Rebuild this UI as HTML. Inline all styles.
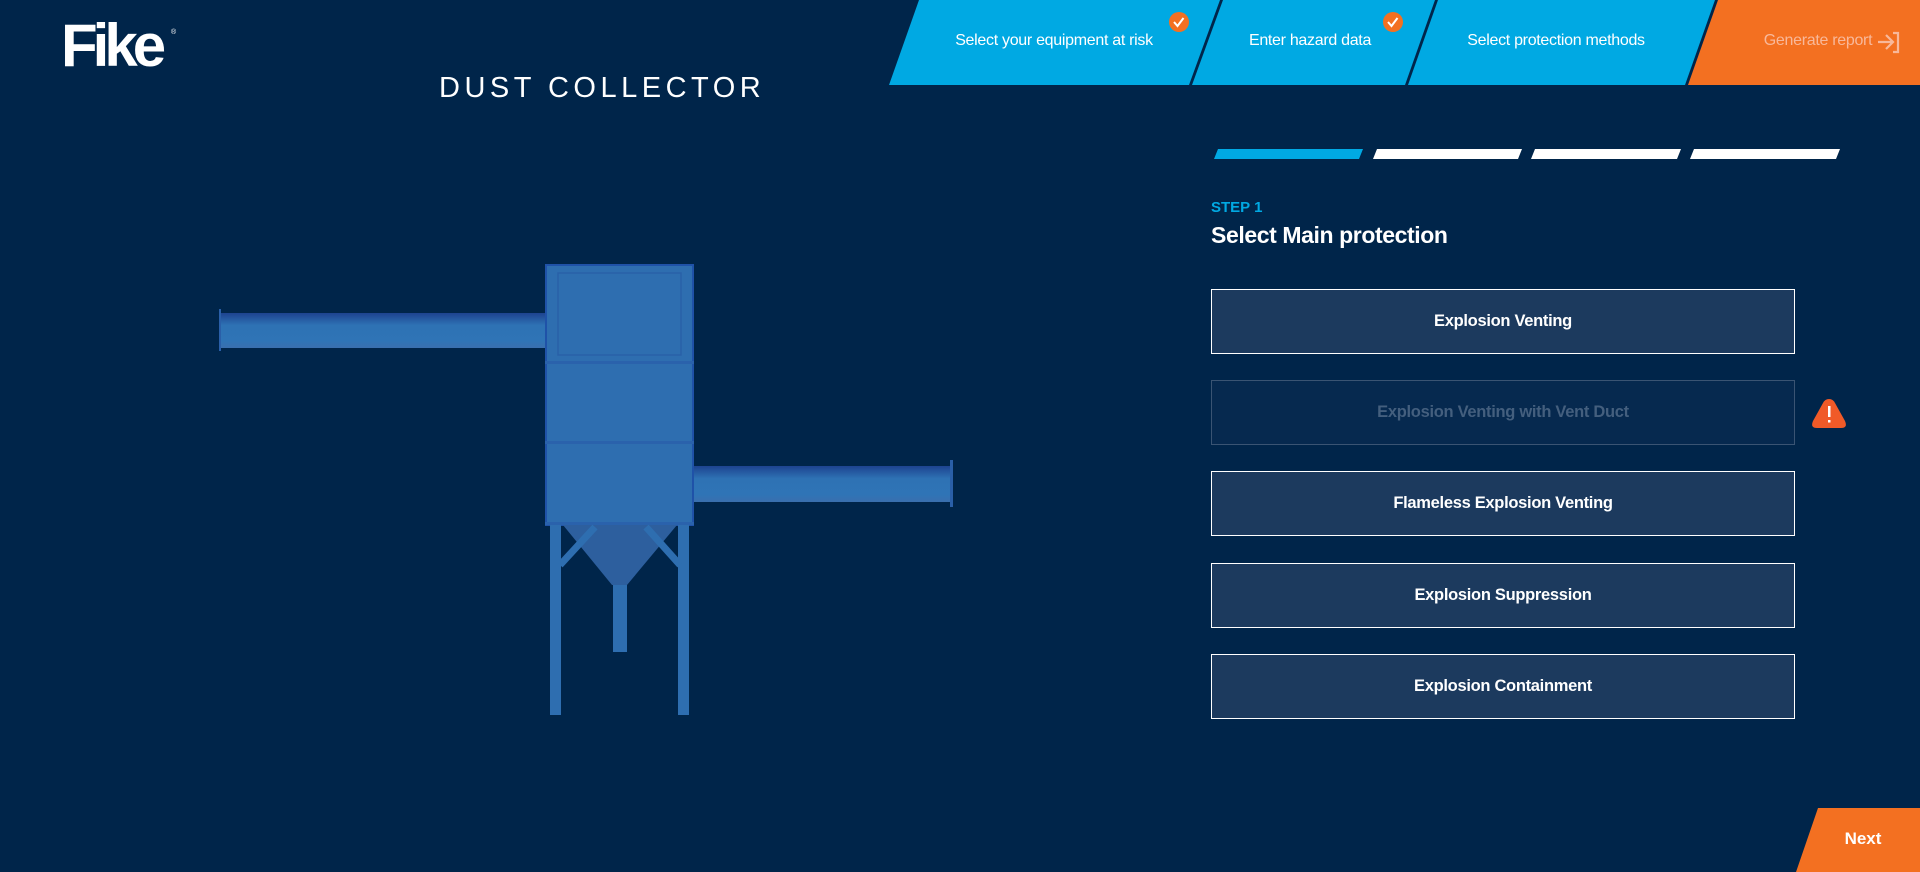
<!DOCTYPE html>
<html><head><meta charset="utf-8"><style>
*{margin:0;padding:0;box-sizing:border-box}
body{width:1920px;height:872px;background:#00254a;overflow:hidden;position:relative;font-family:"Liberation Sans",sans-serif;color:#fff}
.abs{position:absolute}
.navt{position:absolute;top:32px;font-size:16px;letter-spacing:-0.3px;white-space:nowrap;transform:translateX(-50%)}
.btn{position:absolute;left:1211px;width:584px;height:65px;border:1.5px solid #fff;background:#1c3a5e;display:flex;align-items:center;justify-content:center;font-weight:bold;font-size:16.5px;letter-spacing:-0.3px}
.btn.dis{border-color:#3a5473;background:#06294f;color:#445f7e}
</style></head><body>
<svg class="abs" style="left:0;top:0" width="1920" height="872">
 <polygon points="919,0 1220,0 1189,85 889,85" fill="#00a9e3"/>
 <polygon points="1223,0 1435,0 1405,85 1192,85" fill="#00a9e3"/>
 <polygon points="1438,0 1715,0 1685,85 1408,85" fill="#00a9e3"/>
 <polygon points="1718,0 1920,0 1920,85 1688,85" fill="#f37021"/>
 <circle cx="1179" cy="22" r="10" fill="#f37021"/>
 <path d="M1174 22 l3.5 4 l6 -8" stroke="#fff" stroke-width="2" fill="none"/>
 <circle cx="1393" cy="22" r="10" fill="#f37021"/>
 <path d="M1388 22 l3.5 4 l6 -8" stroke="#fff" stroke-width="2" fill="none"/>
 <path d="M1878 42 h14 M1886 35 l7 7 l-7 7 M1893 33 h5 v19 h-5" stroke="#f8b89a" stroke-width="2.2" fill="none"/>
 <polygon points="1218,149 1363,149 1359,159 1214,159" fill="#00a9e3"/>
 <polygon points="1377,149 1522,149 1518,159 1373,159" fill="#fff"/>
 <polygon points="1535,149 1681,149 1677,159 1531,159" fill="#fff"/>
 <polygon points="1694,149 1840,149 1836,159 1690,159" fill="#fff"/>
 <path d="M1829 399 q4 0 6 4 l10 18 q3 7 -4 7 h-24 q-7 0 -4 -7 l10 -18 q2 -4 6 -4z" fill="#f05a28"/>
 <rect x="1828" y="406" width="2.5" height="11" fill="#fff"/><rect x="1828" y="420" width="2.5" height="2.5" fill="#fff"/>
 <polygon points="1818,808 1920,808 1920,872 1796,872" fill="#f37021"/>
 <defs><linearGradient id="pg" x1="0" y1="0" x2="0" y2="1"><stop offset="0" stop-color="#1d4390"/><stop offset="0.35" stop-color="#2e72b4"/><stop offset="0.8" stop-color="#2f74b6"/><stop offset="1" stop-color="#3a6fae"/></linearGradient></defs>
 <rect x="219" y="313" width="327" height="35" fill="url(#pg)"/>
 <rect x="219" y="309" width="2" height="42" fill="#2a5fa8"/>
 <rect x="693" y="466" width="258" height="36" fill="url(#pg)"/>
 <rect x="950" y="460" width="3" height="47" fill="#2a5fa8"/>
 <rect x="546" y="265" width="147" height="260" fill="#2e6eb0" stroke="#1f52a8" stroke-width="2"/>
 <rect x="558" y="273" width="123" height="82" fill="none" stroke="#2960a8" stroke-width="1.5"/>
 <rect x="545" y="361" width="149" height="3" fill="#2a62ac"/>
 <rect x="545" y="441" width="149" height="3" fill="#2a62ac"/>
 <rect x="545" y="522" width="149" height="3" fill="#2a62ac"/>
 <polygon points="563,525 677,525 627,585 612,585" fill="#2d5f9e"/>
 <rect x="613" y="585" width="14" height="67" fill="#2e6eb0"/>
 <rect x="550" y="525" width="11" height="190" fill="#2e6eb0"/>
 <rect x="678" y="525" width="11" height="190" fill="#2e6eb0"/>
 <path d="M560 565 L595 527 M680 565 L646 527" stroke="#2e6eb0" stroke-width="7"/>
</svg>
<svg class="abs" style="left:61px;top:14px" width="130" height="60">
 <text x="0" y="52" font-family="Liberation Sans" font-weight="bold" font-size="60" fill="#fff" letter-spacing="-5">Fike</text>
 <text x="110" y="20" font-size="7" fill="#fff">®</text>
</svg>
<div class="abs" style="left:439px;top:72px;width:320px;text-align:center;font-size:29px;letter-spacing:4.5px;white-space:nowrap">DUST COLLECTOR</div>
<div class="navt" style="left:1054px">Select your equipment at risk</div>
<div class="navt" style="left:1310px">Enter hazard data</div>
<div class="navt" style="left:1556px">Select protection methods</div>
<div class="navt" style="left:1818px;color:#f8b89a">Generate report</div>
<div class="abs" style="left:1211px;top:199px;color:#00a9e3;font-weight:bold;font-size:15px">STEP 1</div>
<div class="abs" style="left:1211px;top:222px;font-weight:bold;font-size:23px;letter-spacing:-0.4px">Select Main protection</div>
<div class="btn" style="top:289px">Explosion Venting</div>
<div class="btn dis" style="top:380px">Explosion Venting with Vent Duct</div>
<div class="btn" style="top:471px">Flameless Explosion Venting</div>
<div class="btn" style="top:563px">Explosion Suppression</div>
<div class="btn" style="top:654px">Explosion Containment</div>
<div class="abs" style="left:1863px;top:829px;transform:translateX(-50%);font-weight:bold;font-size:17px">Next</div>
</body></html>
